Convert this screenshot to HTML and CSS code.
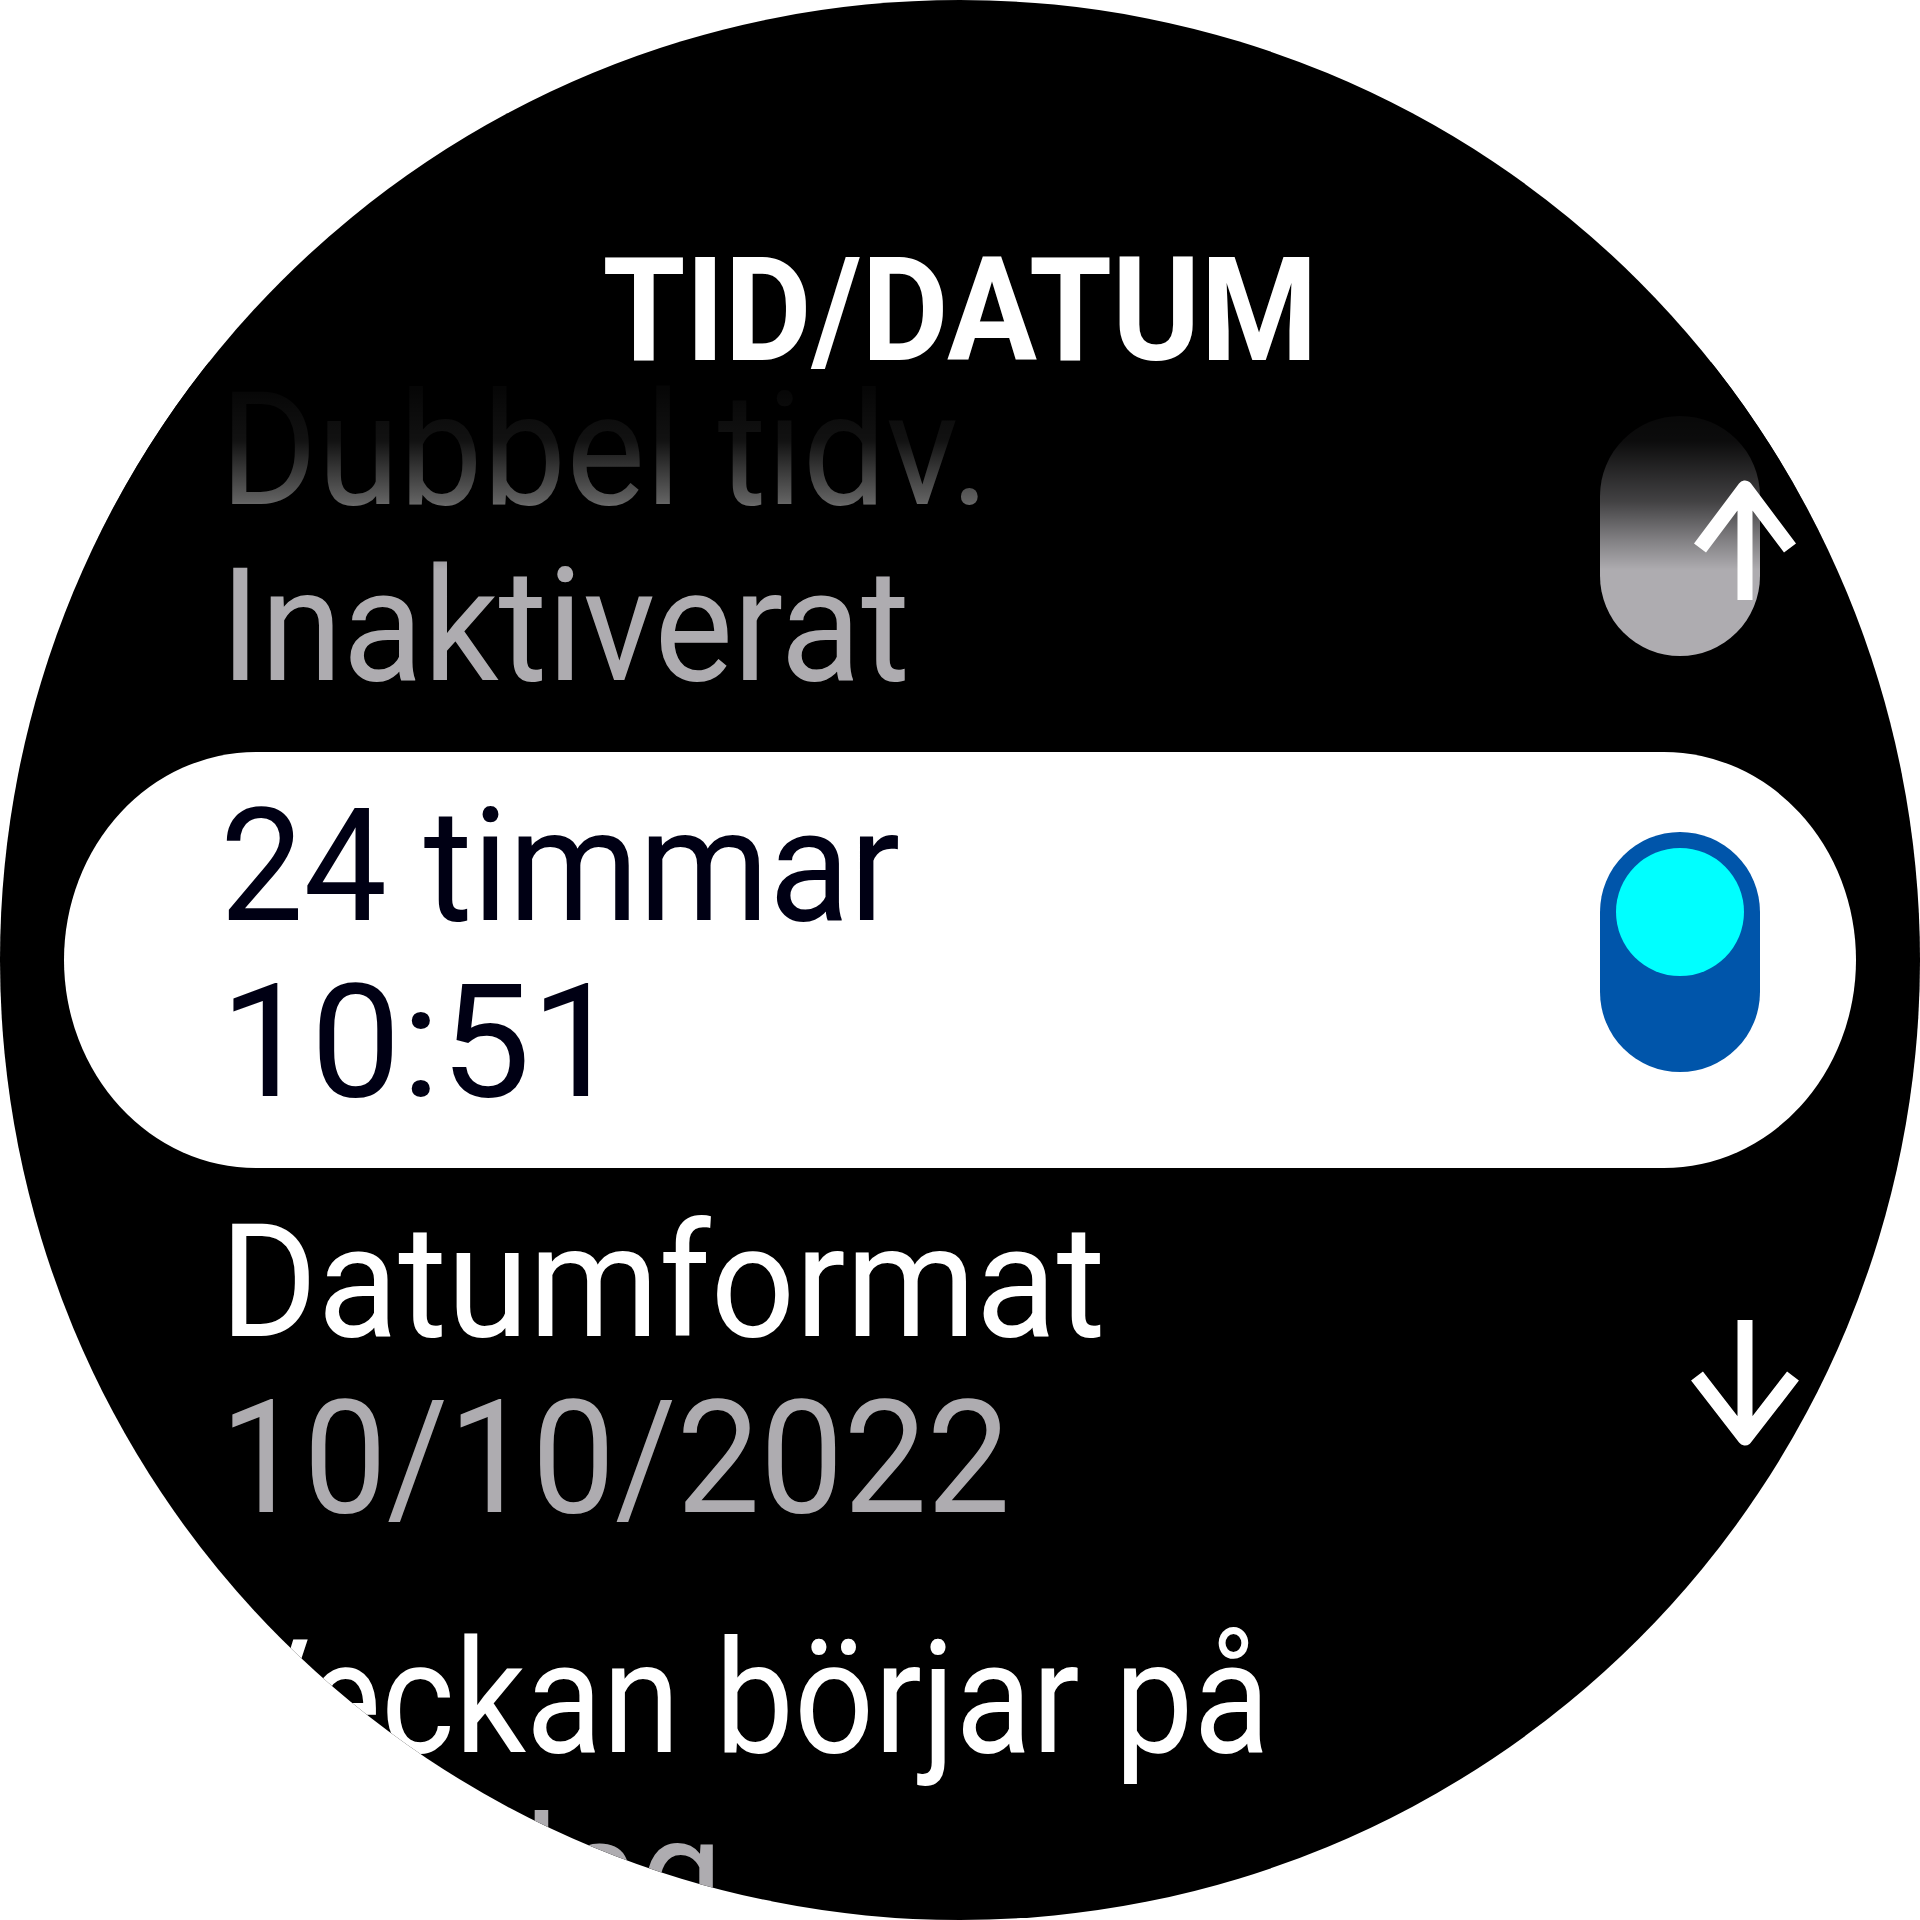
FILE: index.html
```html
<!DOCTYPE html>
<html lang="sv">
<head>
<meta charset="utf-8">
<title>TID/DATUM</title>
<link rel="stylesheet" href="styles.css">
</head>
<body>
<div class="watch">
  <header class="title"><span>TID/DATUM</span></header>
  <div class="list">
    <div class="item">
      <div class="text">
        <div class="label">Dubbel tidv.</div>
        <div class="value">Inaktiverat</div>
      </div>
      <div class="toggle off"></div>
    </div>
    <div class="item selected">
      <div class="text">
        <div class="label">24 timmar</div>
        <div class="value digits">10:51</div>
      </div>
      <div class="toggle on"><div class="knob"></div></div>
    </div>
    <div class="item">
      <div class="text">
        <div class="label">Datumformat</div>
        <div class="value">10/10/2022</div>
      </div>
    </div>
    <div class="item">
      <div class="text">
        <div class="label tight">Veckan börjar på</div>
        <div class="value">Söndag</div>
      </div>
    </div>
  </div>
  <div class="fade"></div>
  <svg class="arrow arrow-up" width="130" height="140" viewBox="0 0 130 140">
    <path d="M65 18 V130 M20 78 L65 18 L110 78" />
  </svg>
  <svg class="arrow arrow-down" width="130" height="140" viewBox="0 0 130 140">
    <path d="M65 10 V128 M17 66 L65 128 L113 66" />
  </svg>
</div>
</body>
</html>
```

FILE: styles.css
```css
html, body {
  margin: 0;
  padding: 0;
  background: #ffffff;
}

.watch {
  position: relative;
  width: 1920px;
  height: 1920px;
  border-radius: 50%;
  background: #000000;
  overflow: hidden;
  font-family: Roboto, "Noto Sans", "Liberation Sans", sans-serif;
}

.title {
  height: 336px;
  box-sizing: border-box;
  padding-top: 260px;
  text-align: center;
  font-size: 145px;
  font-weight: 700;
  line-height: 100px;
  color: #ffffff;
  position: relative;
  z-index: 2;
}

.title span {
  display: inline-block;
  transform: scaleX(0.924);
  transform-origin: center;
}

.item {
  height: 416px;
  box-sizing: border-box;
  margin: 0 64px;
  padding: 26px 96px 0 156px;
  display: flex;
  justify-content: space-between;
  align-items: flex-start;
}

.item.selected {
  background: #ffffff;
  border-radius: 192px / 208px;
}

.text {
  font-size: 158px;
  line-height: 176px;
  font-weight: 400;
}

.text > div {
  white-space: nowrap;
  transform: scaleX(0.94);
  transform-origin: left center;
}

.text > .digits {
  transform: scaleX(1.02);
}

.text > .tight {
  transform: scaleX(0.89);
}

.label {
  color: #ffffff;
}

.value {
  color: #aeacb0;
}

.selected .label,
.selected .value {
  color: #000014;
}

.toggle {
  flex: none;
  width: 160px;
  height: 240px;
  border-radius: 80px;
  margin-top: 54px;
  box-sizing: border-box;
}

.toggle.off {
  background: #aeacb0;
}

.toggle.on {
  background: #0055aa;
  padding: 16px;
}

.knob {
  width: 128px;
  height: 128px;
  border-radius: 50%;
  background: #00ffff;
}

.fade {
  position: absolute;
  left: 0;
  right: 0;
  top: 362px;
  height: 208px;
  background: linear-gradient(to bottom,
    #000000 0%,
    rgba(0, 0, 0, 0.93) 38%,
    rgba(0, 0, 0, 0.62) 67%,
    rgba(0, 0, 0, 0.25) 86%,
    rgba(0, 0, 0, 0) 100%);
  pointer-events: none;
}

.arrow {
  position: absolute;
  left: 1680px;
  fill: none;
  stroke: #ffffff;
  stroke-width: 15;
  stroke-linecap: butt;
  stroke-linejoin: round;
}

.arrow-up {
  top: 470px;
}

.arrow-down {
  top: 1310px;
}
```
